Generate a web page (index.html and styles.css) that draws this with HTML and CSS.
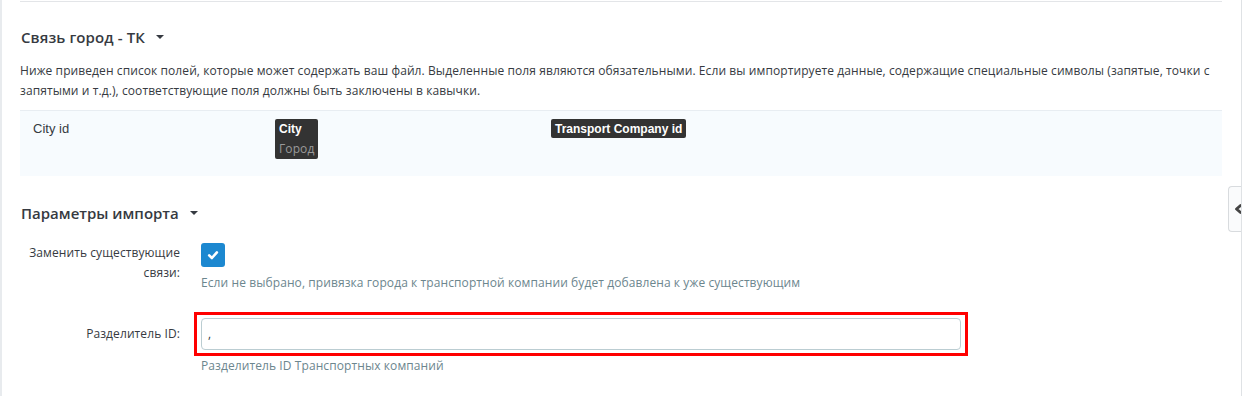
FILE: index.html
```html
<!DOCTYPE html>
<html lang="ru">
<head>
<meta charset="utf-8">
<title>Импорт</title>
<link rel="stylesheet" href="styles.css">
</head>
<body>
<div class="panel">
  <div class="content">
    <div class="divider"></div>
    <h3 class="section-title">Связь город - ТК <span class="caret"></span></h3>
    <p class="desc">Ниже приведен список полей, которые может содержать ваш файл. Выделенные поля являются обязательными. Если вы импортируете данные, содержащие специальные символы (запятые, точки с запятыми и т.д.), соответствующие поля должны быть заключены в кавычки.</p>
    <div class="fields-table">
      <div class="fields-row">
        <div class="cell-name">City id</div>
        <div class="cell"><span class="badge"><b>City</b><span class="badge-sub">Город</span></span></div>
        <div class="cell"><span class="badge"><b>Transport Company id</b></span></div>
      </div>
    </div>
    <h3 class="section-title second">Параметры импорта <span class="caret"></span></h3>
    <div class="form-row first">
      <label class="form-label">Заменить существующие связи:</label>
      <div class="form-field">
        <span class="checkbox"><svg viewBox="0 0 12 12" width="12" height="12"><path d="M2.2 6.4 L4.9 9 L9.9 3.4" fill="none" stroke="#fff" stroke-width="2.6" stroke-linecap="round" stroke-linejoin="round"/></svg></span>
        <div class="help">Если не выбрано, привязка города к транспортной компании будет добавлена к уже существующим</div>
      </div>
    </div>
    <div class="form-row">
      <label class="form-label pad">Разделитель ID:</label>
      <div class="form-field">
        <div class="highlight"><div class="input">,</div></div>
        <div class="help">Разделитель ID Транспортных компаний</div>
      </div>
    </div>
  </div>
  <div class="side-tab"><svg viewBox="0 0 8 10" width="8" height="10"><path d="M6.5 1.5 L2.5 5 L6.5 8.5" fill="none" stroke="#444" stroke-width="2.8" stroke-linecap="round" stroke-linejoin="round"/></svg></div>
</div>
</body>
</html>
```

FILE: styles.css
```css
html, body {
  margin: 0;
  padding: 0;
  background: #fff;
}
body {
  font-family: "Open Sans", "Noto Sans", sans-serif;
  color: #363a41;
  font-size: 12px;
  letter-spacing: 0.09px;
}
.panel {
  position: relative;
  width: 1239px;
  height: 396px;
  border-left: 2px solid #e8ebee;
  border-right: 1px solid #dfe2e5;
  overflow: hidden;
}
.content {
  margin: 0 19px 0 18px;
}
.divider {
  height: 1px;
  margin-top: 1px;
  background: #e3e5e8;
}
.section-title {
  margin: 24px 0 0 1px;
  font-size: 15px;
  font-weight: 600;
  line-height: 22px;
  letter-spacing: 0.1px;
  color: #363a41;
  display: flex;
  align-items: center;
}
.section-title.second {
  margin-top: 26px;
  letter-spacing: 0;
}
.caret {
  display: inline-block;
  width: 0;
  height: 0;
  margin-left: 11px;
  border-left: 4px solid transparent;
  border-right: 4px solid transparent;
  border-top: 4px solid #363a41;
}
.desc {
  margin: 13px 0 0;
  line-height: 20px;
  font-size: 12px;
  color: #363a41;
}
.fields-table {
  margin-top: 9px;
  border-top: 1px solid #e8edf2;
  background: #f7fbfe;
}
.fields-row {
  display: grid;
  grid-template-columns: 242px 276px 1fr;
  padding: 8px 0 0 13px;
  height: 57px;
}
.cell-name {
  font-family: "Liberation Sans", Arial, sans-serif;
  font-size: 13px;
  line-height: 18px;
  padding-top: 1px;
  letter-spacing: 0;
  color: #363a41;
}
.badge {
  display: inline-flex;
  flex-direction: column;
  background: #333;
  border-radius: 2px;
  padding: 1px 4px 0;
  color: #fff;
}
.badge b {
  font-family: "Liberation Sans", Arial, sans-serif;
  font-size: 12px;
  font-weight: 700;
  line-height: 18px;
  letter-spacing: 0;
}
.badge-sub {
  font-family: "Open Sans", sans-serif;
  font-size: 12px;
  line-height: 21px;
  color: #9a9a9a;
}
.form-row {
  display: flex;
  margin-top: 25px;
}
.form-row.first {
  margin-top: 19px;
}
.form-label {
  width: 160px;
  flex: none;
  text-align: right;
  line-height: 20px;
  font-size: 12px;
  color: #363a41;
}
.form-label.pad {
  padding-top: 6px;
}
.form-field {
  margin-left: 21px;
  flex: 1;
}
.checkbox {
  display: flex;
  align-items: center;
  justify-content: center;
  width: 24px;
  height: 24px;
  border-radius: 3px;
  background: #1c88d0;
}
.help {
  margin-top: 6px;
  line-height: 20px;
  color: #6c868e;
}
.highlight {
  width: 760px;
  margin: -6px 0 -6px -7px;
  border: 3px solid #f00;
  padding: 3px 4px;
}
.input {
  box-sizing: border-box;
  height: 32px;
  border: 1px solid #bbcdd2;
  border-radius: 4px;
  background: #fff;
  padding: 0 6px;
  line-height: 30px;
  color: #363a41;
}
.side-tab {
  position: absolute;
  right: -1px;
  top: 186px;
  width: 14px;
  height: 46px;
  border: 1px solid #d8dbde;
  border-right: none;
  border-radius: 4px 0 0 4px;
  background: #fafbfc;
  display: flex;
  align-items: center;
  padding-left: 5px;
  box-sizing: border-box;
}
```
